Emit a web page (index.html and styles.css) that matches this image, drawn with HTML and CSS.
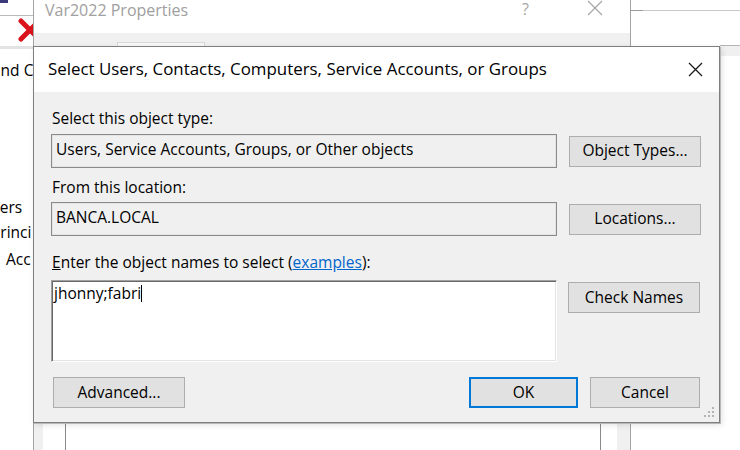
FILE: index.html
```html
<!DOCTYPE html>
<html>
<head>
<meta charset="utf-8">
<link rel="stylesheet" href="styles.css">
</head>
<body>
<div class="desk">
  <div class="app-left">
    <div class="al-topbar"></div>
    <div class="al-toolbar">
      <span class="al-sep"></span>
      <svg class="al-del" width="24" height="24" viewBox="0 0 24 24"><path d="M3 3 L21 21 M21 3 L3 21" stroke="#d9121c" stroke-width="5" stroke-linecap="round"/></svg>
    </div>
    <div class="al-tree">
      <div class="al-item t1">and C</div>
      <div class="al-item t2">Users</div>
      <div class="al-item t3">Princi</div>
      <div class="al-item t4">Acc</div>
    </div>
  </div>

  <div class="app-right">
    <div class="ar-line"></div>
    <div class="ar-band"></div>
  </div>

  <div class="props">
    <div class="props-title">
      <span class="props-name">Var2022 Properties</span>
      <span class="props-help">?</span>
      <svg class="props-close" width="16" height="16" viewBox="0 0 16 16"><path d="M1 1 L15 15 M15 1 L1 15" stroke="#a6a6a6" stroke-width="1.2"/></svg>
    </div>
    <div class="props-body">
      <div class="props-tabs"><span class="props-tab"></span></div>
      <div class="props-page">
        <div class="props-list"></div>
      </div>
    </div>
  </div>

  <div class="dlg">
    <div class="dlg-title">
      <span class="dlg-caption">Select Users, Contacts, Computers, Service Accounts, or Groups</span>
      <svg class="dlg-close" width="15" height="15" viewBox="0 0 15 15"><path d="M1 1 L14 14 M14 1 L1 14" stroke="#1a1a1a" stroke-width="1.3"/></svg>
    </div>
    <div class="dlg-body">
      <div class="lbl">Select this object type:</div>
      <div class="row r1">
        <div class="field">Users, Service Accounts, Groups, or Other objects</div>
        <div class="btn">Object Types...</div>
      </div>
      <div class="lbl l2">From this location:</div>
      <div class="row r2">
        <div class="field">BANCA.LOCAL</div>
        <div class="btn">Locations...</div>
      </div>
      <div class="lbl l3"><span class="ul">E</span>nter the object names to select (<a class="link">examples</a>):</div>
      <div class="row r3">
        <div class="names">jhonny;fabri<span class="caret"></span></div>
        <div class="btn btn-check">Check Names</div>
      </div>
      <div class="bottom">
        <div class="btn btn-adv">Advanced...</div>
        <div class="actions">
          <div class="btn btn-ok">OK</div>
          <div class="btn btn-cancel">Cancel</div>
        </div>
      </div>
    </div>
    <div class="grip">
      <span class="dot d1"></span><span class="dot d2"></span><span class="dot d3"></span>
      <span class="dot d4"></span><span class="dot d5"></span><span class="dot d6"></span>
    </div>
  </div>
</div>
</body>
</html>
```

FILE: styles.css
```css
html, body {
  margin: 0;
  padding: 0;
  background: #ffffff;
}
body {
  font-family: "Open Sans", "Noto Sans", sans-serif;
  color: #000;
}
.desk {
  position: relative;
  width: 740px;
  height: 450px;
  overflow: hidden;
  background: #fff;
}

/* left background app */
.app-left {
  position: absolute;
  left: 0;
  top: 0;
  width: 34px;
  height: 450px;
  overflow: hidden;
  background: #fff;
}
.al-topbar {
  width: 8px;
  height: 3px;
  background: #3c3a78;
}
.al-toolbar {
  margin-top: 12px;
  height: 30px;
  border-top: 1px solid #b9b9b9;
  border-bottom: 3px solid #e3e3e3;
  display: flex;
  align-items: center;
  padding-left: 4px;
  gap: 14px;
}
.al-sep {
  width: 1px;
  height: 26px;
  background: #a8a8a8;
}
.al-del {
  flex: none;
  margin-top: -3px;
}
.al-tree {
  position: relative;
}
.al-item {
  position: absolute;
  white-space: nowrap;
  font-size: 15.5px;
  line-height: 20px;
}
.t1 { left: -8px; top: 11px; }
.t2 { left: -19px; top: 148px; }
.t3 { left: -9px; top: 173px; }
.t4 { left: 6px; top: 200px; }

/* right background app */
.app-right {
  position: absolute;
  left: 631px;
  top: 0;
  width: 109px;
  height: 450px;
  background: #fff;
}
.ar-line {
  margin-top: 10px;
  height: 1px;
  background: linear-gradient(to right, #9a9a9a 0, #9a9a9a 12px, #c9c9c9 12px);
}
.ar-band {
  margin-top: 34px;
  margin-left: 89px;
  height: 10px;
  border-top: 1px solid #b4b4b4;
  background: #f0f0f0;
}

/* Var2022 Properties window */
.props {
  position: absolute;
  left: 33px;
  top: 0;
  width: 596px;
  height: 450px;
  border-left: 1px solid #a3a3a3;
  border-right: 1px solid #a3a3a3;
  background: #fff;
  display: flex;
  flex-direction: column;
}
.props-title {
  height: 33px;
  display: flex;
  align-items: flex-start;
  padding-left: 11px;
  font-size: 16px;
  line-height: 20px;
  color: #a0a0a0;
}
.props-name {
  flex: 1;
}
.props-help {
  margin-right: 58px;
  margin-top: -1px;
  color: #a6a6a6;
}
.props-close {
  margin-right: 27px;
  margin-top: 0;
}
.props-body {
  flex: 1;
  background: #f0f0f0;
  display: flex;
  flex-direction: column;
}
.props-tabs {
  height: 9px;
  padding-left: 83px;
  padding-top: 9px;
}
.props-tab {
  display: block;
  width: 86px;
  height: 9px;
  border: 1px solid #d9d9d9;
  border-bottom: none;
  background: #f8f8f8;
}
.props-page {
  flex: 1;
  margin: 0 13px 0 9px;
  background: #fff;
  padding-left: 22px;
  padding-right: 16px;
  display: flex;
}
.props-list {
  flex: 1;
  border-left: 1px solid #8a8a8a;
  border-right: 1px solid #8a8a8a;
  background: #fff;
}

/* Select Users dialog */
.dlg {
  position: absolute;
  left: 33px;
  top: 46px;
  width: 685px;
  height: 375px;
  border: 1px solid #7e7e7e;
  background: #f0f0f0;
  box-shadow: 1px 1px 0 #b8b8b8, 2px 2px 6px rgba(0, 0, 0, 0.12);
  display: flex;
  flex-direction: column;
}
.dlg-title {
  height: 45px;
  flex: none;
  background: #fff;
  display: flex;
  align-items: center;
  justify-content: space-between;
  padding: 0 16px 0 14px;
}
.dlg-caption {
  font-size: 16.9px;
  line-height: 20px;
  color: #000;
  margin-top: -2px;
}
.dlg-close {
  margin-top: -1px;
}
.dlg-body {
  flex: 1;
  padding: 16px 18px 0 17px;
  display: flex;
  flex-direction: column;
  font-size: 15.5px;
}
.lbl {
  height: 20px;
  line-height: 20px;
  padding-left: 1px;
  white-space: nowrap;
}
.l2 { margin-top: 9px; }
.l3 { margin-top: 16px; }
.ul {
  text-decoration: underline;
  text-decoration-skip-ink: none;
}
.link {
  color: #0066cc;
  text-decoration: underline;
}
.row {
  display: flex;
  align-items: center;
  gap: 12px;
}
.r1 { margin-top: 6px; }
.r2 { margin-top: 5px; }
.r3 {
  margin-top: 8px;
  align-items: flex-start;
}
.field {
  box-sizing: border-box;
  width: 506px;
  height: 34px;
  border: 1px solid #8a8a8a;
  box-shadow: inset 0 0 0 1px #e4e4e4;
  background: #f0f0f0;
  padding: 0 0 5px 4px;
  display: flex;
  align-items: center;
  white-space: nowrap;
}
.names {
  box-sizing: border-box;
  width: 506px;
  height: 82px;
  background: #fff;
  border-top: 1px solid #a0a0a0;
  border-left: 1px solid #a0a0a0;
  border-right: 1px solid #ffffff;
  border-bottom: 1px solid #ffffff;
  box-shadow: inset 1px 1px 0 #696969, inset -1px -1px 0 #e3e3e3;
  padding: 2px 0 0 2px;
  line-height: 20px;
  white-space: nowrap;
  display: flex;
  align-items: flex-start;
}
.caret {
  display: inline-block;
  width: 1px;
  height: 17px;
  margin-top: 2px;
  background: #000;
}
.btn {
  box-sizing: border-box;
  width: 132px;
  height: 31px;
  background: #e1e1e1;
  border: 1px solid #adadad;
  display: flex;
  align-items: center;
  justify-content: center;
  white-space: nowrap;
  padding-bottom: 2px;
}
.btn-check {
  margin-top: 2px;
  margin-left: -1px;
}
.bottom {
  margin-top: 15px;
  display: flex;
  justify-content: space-between;
  align-items: center;
  padding-left: 2px;
  padding-right: 1px;
}
.actions {
  display: flex;
  gap: 12px;
}
.btn-ok {
  width: 109px;
  border: 2px solid #0078d7;
}
.btn-cancel {
  width: 110px;
}
.grip {
  position: absolute;
  right: 4px;
  bottom: 3px;
  width: 12px;
  height: 12px;
}
.dot {
  position: absolute;
  width: 2px;
  height: 2px;
  background: #b4b4b4;
}
.d1 { right: 1px; top: 0; }
.d2 { right: 1px; top: 4px; }
.d3 { right: 5px; top: 4px; }
.d4 { right: 1px; top: 8px; }
.d5 { right: 5px; top: 8px; }
.d6 { right: 9px; top: 8px; }
```
